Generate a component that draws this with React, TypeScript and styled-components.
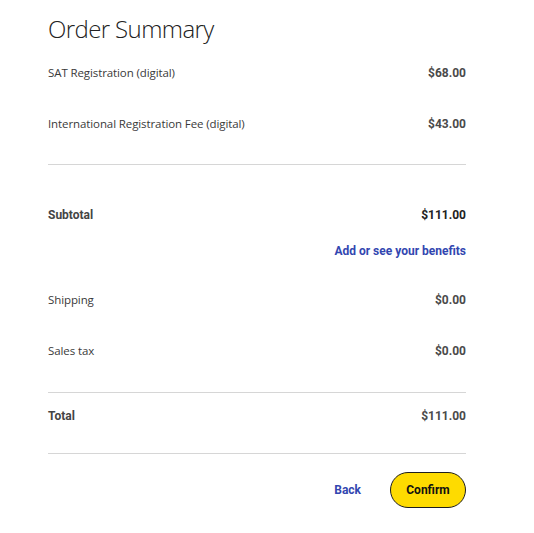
import styled, { createGlobalStyle } from 'styled-components';

const GlobalStyle = createGlobalStyle`
  body {
    margin: 0;
    background: #ffffff;
    font-family: "Open Sans", "Liberation Sans", sans-serif;
  }
`;

type Line = { label: string; amount: string };

const items: Line[] = [
  { label: 'SAT Registration (digital)', amount: '$68.00' },
  { label: 'International Registration Fee (digital)', amount: '$43.00' },
];

const charges: Line[] = [
  { label: 'Shipping', amount: '$0.00' },
  { label: 'Sales tax', amount: '$0.00' },
];

function App() {
  return (
    <>
      <GlobalStyle />
      <Summary>
        <Title>Order Summary</Title>

        {items.map((item) => (
          <Row key={item.label} $height={51}>
            <Label>{item.label}</Label>
            <Amount>{item.amount}</Amount>
          </Row>
        ))}

        <Divider $top={15} />

        <Row $height={51} $top={24}>
          <Label $bold>Subtotal</Label>
          <Amount $dark>$111.00</Amount>
        </Row>
        <LinkRow>
          <BenefitsLink href="#">Add or see your benefits</BenefitsLink>
        </LinkRow>

        {charges.map((charge, i) => (
          <Row key={charge.label} $height={51} $top={i === 0 ? 12 : 0}>
            <Label>{charge.label}</Label>
            <Amount>{charge.amount}</Amount>
          </Row>
        ))}

        <Divider $top={16} />

        <Row $height={46}>
          <Label $bold>Total</Label>
          <Amount>$111.00</Amount>
        </Row>

        <Divider $top={14} />

        <Actions>
          <BackButton type="button">Back</BackButton>
          <ConfirmButton type="button">Confirm</ConfirmButton>
        </Actions>
      </Summary>
    </>
  );
}

const Summary = styled.div`
  width: 418px;
  padding: 11px 0 20px 48px;
  display: flex;
  flex-direction: column;
`;

const Title = styled.h1`
  margin: 0;
  font-family: "Open Sans", sans-serif;
  font-weight: 300;
  font-size: 24px;
  line-height: 36px;
  color: #222222;
  letter-spacing: -0.6px;
`;

const Row = styled.div<{ $height: number; $top?: number }>`
  height: ${(p) => p.$height}px;
  margin-top: ${(p) => p.$top ?? 0}px;
  display: flex;
  align-items: center;
  justify-content: space-between;
`;

const Label = styled.span<{ $bold?: boolean }>`
  font-family: ${(p) => (p.$bold ? '"Roboto", sans-serif' : '"Open Sans", sans-serif')};
  font-size: ${(p) => (p.$bold ? 12 : 11.5)}px;
  font-weight: ${(p) => (p.$bold ? 700 : 400)};
  color: ${(p) => (p.$bold ? '#444444' : '#3a3a3a')};
  letter-spacing: ${(p) => (p.$bold ? 0 : -0.1)}px;
`;

const Amount = styled.span<{ $dark?: boolean }>`
  font-family: "Roboto", "Liberation Sans", sans-serif;
  font-size: 12px;
  font-weight: 700;
  color: ${(p) => (p.$dark ? '#222222' : '#4a4a4a')};
`;

const Divider = styled.hr<{ $top: number }>`
  margin: ${(p) => p.$top}px 0 0;
  border: none;
  border-top: 1px solid #d6d6d6;
  width: 100%;
`;

const LinkRow = styled.div`
  height: 22px;
  display: flex;
  align-items: center;
  justify-content: flex-end;
`;

const BenefitsLink = styled.a`
  font-family: "Roboto", sans-serif;
  font-size: 12px;
  font-weight: 700;
  color: #3246b0;
  text-decoration: none;
`;

const Actions = styled.div`
  margin-top: 18px;
  display: flex;
  justify-content: flex-end;
  align-items: center;
  gap: 29px;
`;

const BackButton = styled.button`
  background: none;
  border: none;
  padding: 0;
  font-family: "Roboto", sans-serif;
  font-size: 12px;
  font-weight: 700;
  color: #3246b0;
  cursor: pointer;
`;

const ConfirmButton = styled.button`
  width: 76px;
  height: 36px;
  border-radius: 18px;
  border: 1px solid #1e1e1e;
  background: #fedb00;
  font-family: "Roboto", sans-serif;
  font-size: 12px;
  font-weight: 700;
  color: #111111;
  cursor: pointer;
`;

export default App;
